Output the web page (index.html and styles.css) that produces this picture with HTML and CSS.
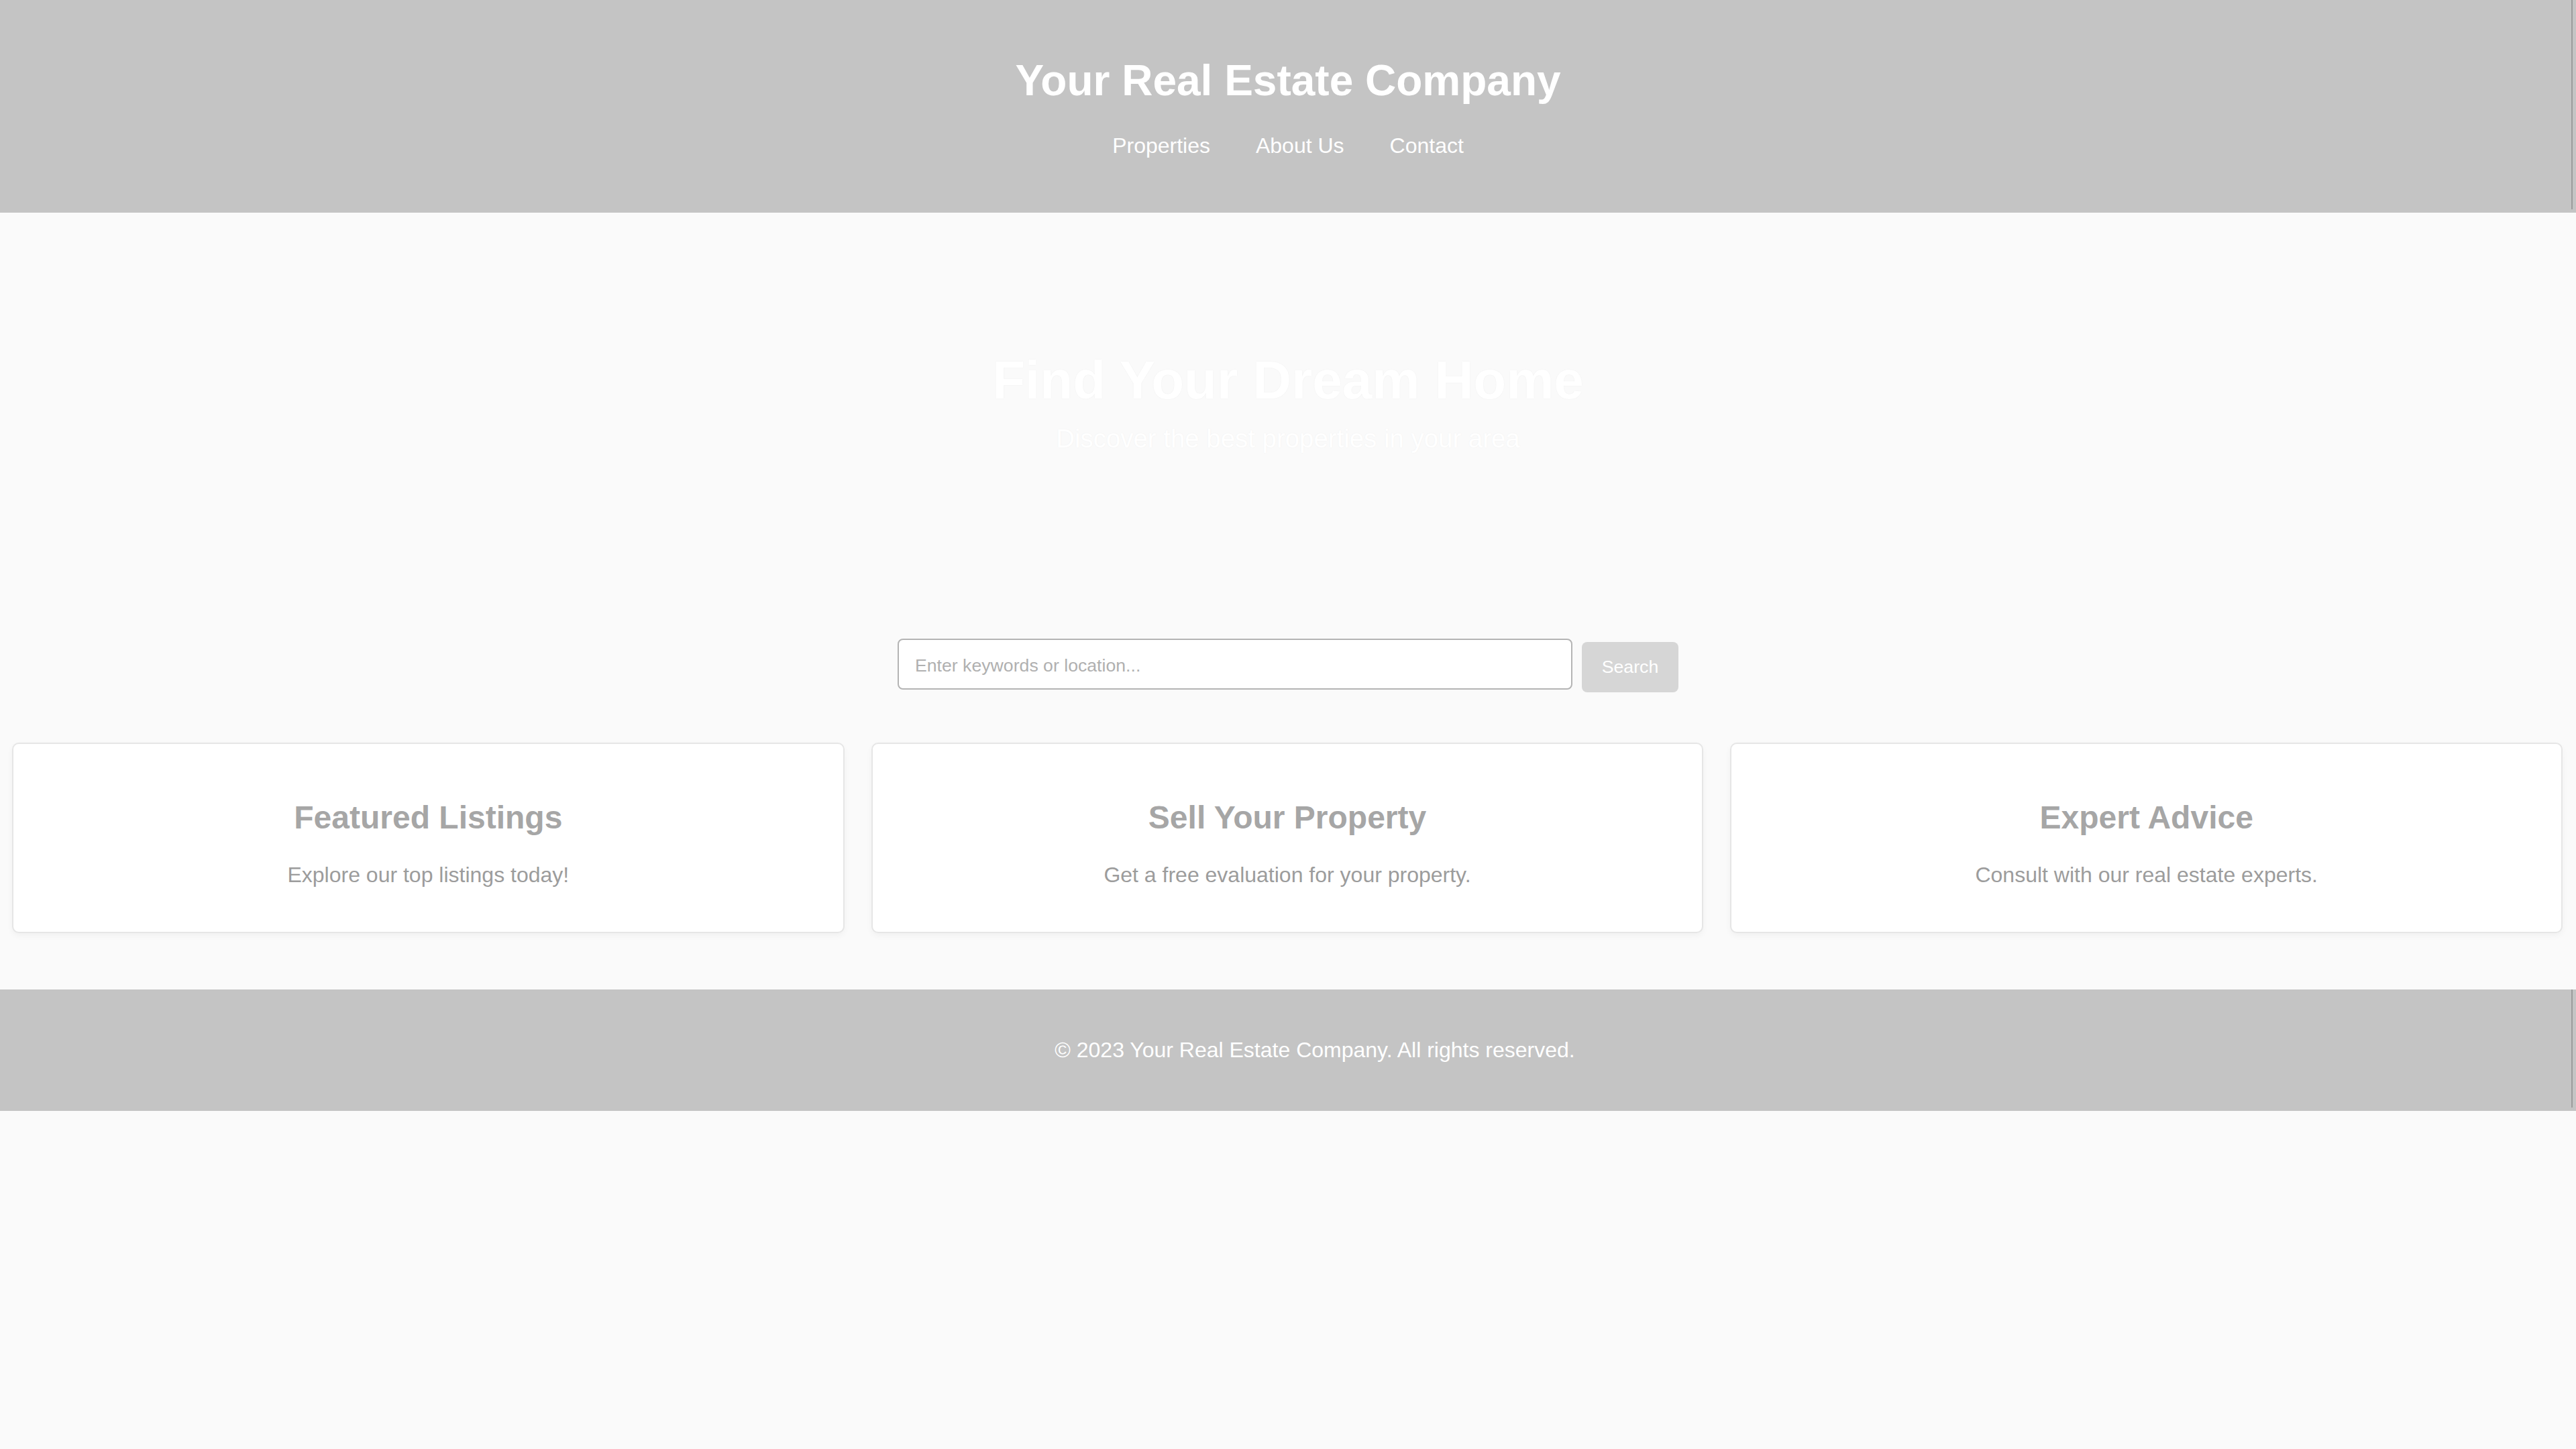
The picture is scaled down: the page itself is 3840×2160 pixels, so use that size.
FILE: index.html
```html
<!DOCTYPE html>
<html lang="en">
<head>
<meta charset="utf-8">
<title>Your Real Estate Company</title>
<link rel="stylesheet" href="styles.css">
</head>
<body>
<header class="site-header">
  <h1 class="brand">Your Real Estate Company</h1>
  <nav>
    <ul class="nav-list">
      <li><a href="#">Properties</a></li>
      <li><a href="#">About Us</a></li>
      <li><a href="#">Contact</a></li>
    </ul>
  </nav>
</header>
<section class="hero">
  <h2 class="hero-title">Find Your Dream Home</h2>
  <p class="hero-sub">Discover the best properties in your area</p>
</section>
<section class="search">
  <input class="search-input" type="text" placeholder="Enter keywords or location...">
  <button class="search-btn" type="button">Search</button>
</section>
<section class="features">
  <div class="card">
    <h2>Featured Listings</h2>
    <p>Explore our top listings today!</p>
  </div>
  <div class="card">
    <h2>Sell Your Property</h2>
    <p>Get a free evaluation for your property.</p>
  </div>
  <div class="card">
    <h2>Expert Advice</h2>
    <p>Consult with our real estate experts.</p>
  </div>
</section>
<footer class="site-footer">
  <p>&copy; 2023 Your Real Estate Company. All rights reserved.</p>
</footer>
</body>
</html>
```

FILE: styles.css
```css
* {
  box-sizing: border-box;
}

html,
body {
  margin: 0;
}

body {
  background: #fafafa;
  font-family: "Liberation Sans", Arial, sans-serif;
}

.site-header {
  position: relative;
  background: #c4c4c4;
  color: #fff;
  text-align: center;
  padding: 40px 0;
}

.site-header::after,
.site-footer::after {
  content: "";
  position: absolute;
  top: 0;
  bottom: 5px;
  right: 5px;
  width: 2px;
  background: #9c9c9c;
}

.brand {
  margin: 43px 0 42px;
  font-size: 64px;
  line-height: 74px;
  font-weight: bold;
}

.nav-list {
  list-style: none;
  margin: 0 0 41px;
  padding: 0;
  display: flex;
  justify-content: center;
  gap: 68px;
  font-size: 32px;
  line-height: 37px;
}

.nav-list a {
  color: #fff;
  text-decoration: none;
}

.hero {
  padding: 204px 0 236px;
  text-align: center;
  color: #fff;
}

.hero-title {
  margin: 0;
  font-size: 80px;
  line-height: 92px;
  font-weight: bold;
  text-shadow: 0 0 2px rgba(0, 0, 0, 0.05);
}

.hero-sub {
  margin: 19px 0 0;
  font-size: 38.4px;
  line-height: 44px;
  text-shadow: 0 0 2px rgba(0, 0, 0, 0.05);
}

.search {
  display: flex;
  justify-content: center;
  align-items: flex-start;
  gap: 14px;
  padding: 40px 0;
}

.search-input {
  width: 1006px;
  height: 76px;
  padding: 4px 24px 0;
  border: 2px solid #b4b4b4;
  border-radius: 8px;
  background: #fff;
  font-family: "Liberation Sans", Arial, sans-serif;
  font-size: 26.67px;
  color: #555;
  outline: none;
}

.search-input::placeholder {
  color: #b0b0b0;
}

.search-btn {
  margin-top: 5px;
  width: 144px;
  height: 75px;
  border: 0;
  border-radius: 8px;
  background: #d6d6d6;
  color: #fff;
  font-family: "Liberation Sans", Arial, sans-serif;
  font-size: 26.67px;
  padding: 0;
}

.features {
  display: flex;
  gap: 40px;
  padding: 35px 20px 84px 18px;
}

.card {
  flex: 1;
  background: #fff;
  border: 2px solid #e6e6e6;
  border-radius: 10px;
  box-shadow: 0 4px 10px rgba(0, 0, 0, 0.04);
  padding: 42px 40px 66px;
  text-align: center;
}

.card h2 {
  margin: 40px 0;
  font-size: 48px;
  line-height: 55px;
  font-weight: bold;
  color: #a6a6a6;
}

.card p {
  margin: 0;
  font-size: 32px;
  line-height: 37px;
  color: #9c9c9c;
}

.site-footer {
  position: relative;
  background: #c4c4c4;
  color: #fff;
  text-align: center;
  padding: 40px 0 40px 80px;
}

.site-footer p {
  margin: 32px 0;
  font-size: 32px;
  line-height: 37px;
}
```
